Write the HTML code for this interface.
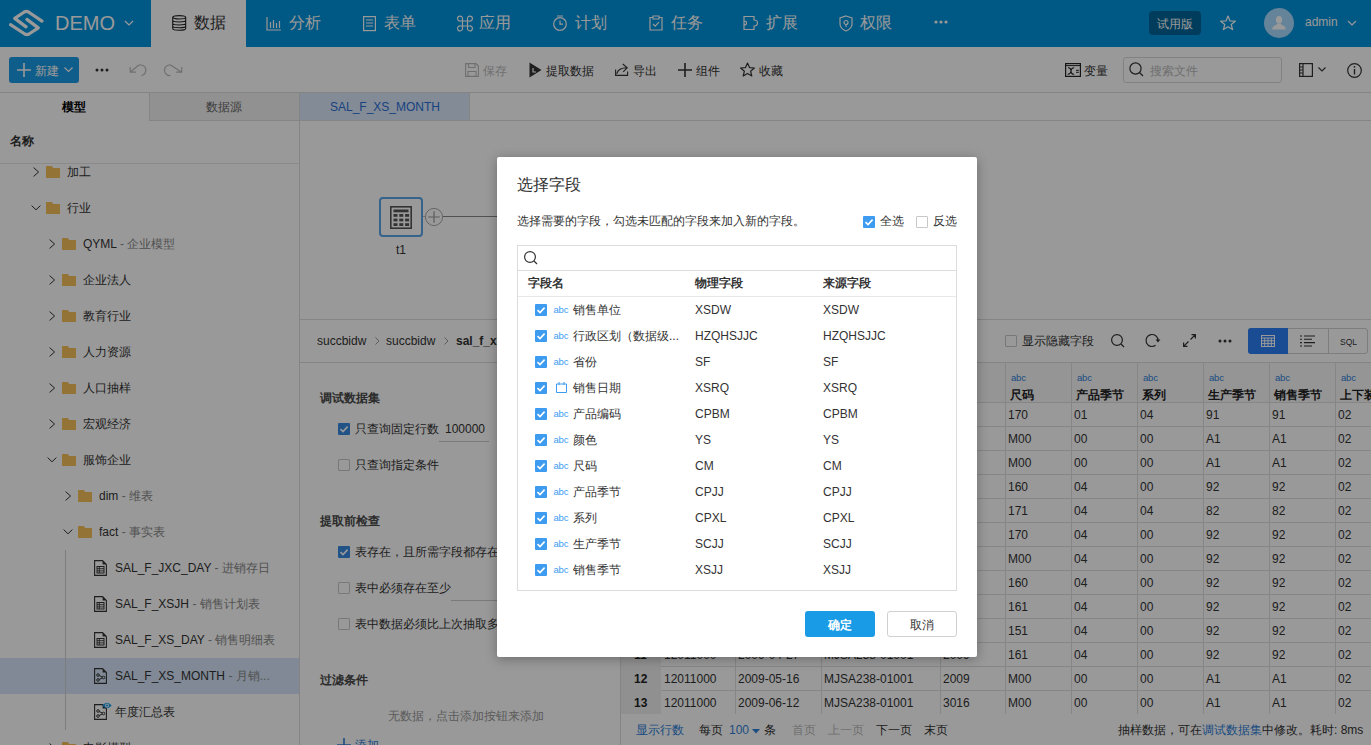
<!DOCTYPE html><html><head><meta charset="utf-8"><style>
*{box-sizing:border-box;margin:0;padding:0}
html,body{width:1371px;height:745px;overflow:hidden;background:#fff}
body{font-family:"Liberation Sans",sans-serif;font-size:12px;color:#333;position:relative}
.a{position:absolute}
.t{position:absolute;white-space:nowrap;line-height:1}
svg{position:absolute;overflow:visible}
#hdr{left:0;top:0;width:1371px;height:47px;background:#0093dc}
.nv{position:absolute;top:15px;font-size:16px;color:#fff;line-height:16px;white-space:nowrap}
#ov{left:0;top:0;width:1371px;height:745px;background:rgba(0,0,0,.4)}
#modal{left:497px;top:157px;width:480px;height:500px;background:#fff;border-radius:2px;box-shadow:0 2px 12px rgba(0,0,0,.3)}
.hl{position:absolute;height:1px;background:#e0e0e0}
.vl{position:absolute;width:1px;background:#e0e0e0}
.cb{position:absolute;width:12px;height:12px;border:1px solid #c8c8c8;background:#fff;border-radius:1px}
.cbk{position:absolute;width:12px;height:12px;background:#3d9cf0;border-radius:1px}
.g{color:#888}
.b{font-weight:bold}
</style></head><body>
<div id="hdr" class="a"></div>
<svg width="50" height="47" style="left:0px;top:0px" viewBox="0 0 50 47"><path d="M42 21.1 L28.5 12 Q26.4 10.8 24.3 12 L14.7 18.4 L26.1 26.9" fill="none" stroke="#fff" stroke-width="3.2" stroke-linecap="round" stroke-linejoin="round"/><path d="M26.9 19.4 L38.3 27.9 L29 34 Q26.9 35.2 24.8 34 L10.5 24.6" fill="none" stroke="#fff" stroke-width="3.2" stroke-linecap="round" stroke-linejoin="round"/></svg>
<div class="t" style="left:55px;top:12.5px;font-size:20px;color:#fff">DEMO</div>
<svg width="10" height="6" style="left:124px;top:20px" viewBox="0 0 10 6"><path d="M1 1 L5 5 L9 1" fill="none" stroke="#fff" stroke-width="1.2"/></svg>
<div class="a" style="left:151px;top:0px;width:95px;height:47px;background:#fff"></div>
<svg width="15" height="16" style="left:172px;top:15px" viewBox="0 0 15 16"><ellipse cx="7.2" cy="2.3" rx="6.5" ry="1.7" fill="none" stroke="#222" stroke-width="1.05"/><path d="M0.7 2.3 V13.6 Q0.7 15.3 7.2 15.3 Q13.7 15.3 13.7 13.6 V2.3 M0.7 5.2 Q0.7 6.9 7.2 6.9 Q13.7 6.9 13.7 5.2 M0.7 8.3 Q0.7 10 7.2 10 Q13.7 10 13.7 8.3 M0.7 11.1 Q0.7 12.8 7.2 12.8 Q13.7 12.8 13.7 11.1" fill="none" stroke="#222" stroke-width="1.05"/></svg>
<div class="nv" style="left:194px;color:#333">数据</div>
<svg width="16" height="15" style="left:266px;top:16px" viewBox="0 0 16 15"><path d="M1 1 V14 H15 M4.5 6 V12 M7.5 4 V12 M10.5 7 V12 M13.5 5 V12" fill="none" stroke="#fff" stroke-width="1.2"/></svg>
<div class="nv" style="left:289px">分析</div>
<svg width="13" height="15" style="left:363px;top:16px" viewBox="0 0 13 15"><rect x="0.6" y="0.6" width="11.8" height="14" fill="none" stroke="#fff" stroke-width="1.2"/><path d="M3 4 H10 M3 7 H10 M3 10 H10" fill="none" stroke="#fff" stroke-width="1.2"/></svg>
<div class="nv" style="left:384px">表单</div>
<svg width="16" height="15" style="left:457px;top:16px" viewBox="0 0 16 15"><path d="M5.5 5 H10.5 V10 H5.5 Z M5.5 5 H3.5 A2.5 2.5 0 1 1 5.5 3 Z M10.5 5 V3 A2.5 2.5 0 1 1 12.5 5 Z M5.5 10 H3.5 A2.5 2.5 0 1 0 5.5 12 Z M10.5 10 V12 A2.5 2.5 0 1 0 12.5 10 Z" fill="none" stroke="#fff" stroke-width="1.2"/></svg>
<div class="nv" style="left:479px">应用</div>
<svg width="16" height="16" style="left:552px;top:15px" viewBox="0 0 16 16"><circle cx="8" cy="9" r="6.3" fill="none" stroke="#fff" stroke-width="1.2"/><path d="M5 1 H11 M8 5.5 V9.2 H11" fill="none" stroke="#fff" stroke-width="1.2"/></svg>
<div class="nv" style="left:575px">计划</div>
<svg width="14" height="16" style="left:649px;top:15px" viewBox="0 0 14 16"><path d="M4 2.5 H1 V15 H13 V2.5 H10 M4 1 H10 V4 H4 Z M4 9 L6.2 11.2 L10 7.2" fill="none" stroke="#fff" stroke-width="1.2"/></svg>
<div class="nv" style="left:671px">任务</div>
<svg width="16" height="16" style="left:743px;top:15px" viewBox="0 0 16 16"><path d="M1 1.5 H11 V5 Q14.5 5 14.5 8 Q14.5 11 11 11 V14.5 H1 Z M1 6 Q3.5 6 3.5 8 Q3.5 10 1 10" fill="none" stroke="#fff" stroke-width="1.2"/></svg>
<div class="nv" style="left:766px">扩展</div>
<svg width="14" height="17" style="left:839px;top:15px" viewBox="0 0 14 17"><path d="M7 1 L13 3 V9 Q13 13.5 7 16 Q1 13.5 1 9 V3 Z" fill="none" stroke="#fff" stroke-width="1.2"/><circle cx="7" cy="7.5" r="2" fill="none" stroke="#fff" stroke-width="1.2"/><path d="M7 9.5 V12" fill="none" stroke="#fff" stroke-width="1.2"/></svg>
<div class="nv" style="left:860px">权限</div>
<svg width="14" height="4" style="left:934px;top:20px" viewBox="0 0 14 4"><circle cx="2" cy="2" r="1.6" fill="#fff"/><circle cx="7" cy="2" r="1.6" fill="#fff"/><circle cx="12" cy="2" r="1.6" fill="#fff"/></svg>
<div class="a" style="left:1149px;top:11px;width:52px;height:24px;background:#00669a;border-radius:4px"></div>
<div class="t" style="left:1157px;top:17.5px;font-size:12px;color:#fff">试用版</div>
<svg width="16" height="15" style="left:1220px;top:15px" viewBox="0 0 16 15"><path d="M8 1 L10 6 L15.3 6.2 L11.2 9.5 L12.6 14.6 L8 11.7 L3.4 14.6 L4.8 9.5 L0.7 6.2 L6 6 Z" fill="none" stroke="#fff" stroke-width="1.2" stroke-linejoin="round"/></svg>
<div class="a" style="left:1264px;top:8px;width:30px;height:30px;background:#a9dcff;border-radius:50%"></div>
<svg width="16" height="16" style="left:1271px;top:15px" viewBox="0 0 16 16"><ellipse cx="8" cy="4.8" rx="3.1" ry="3.8" fill="#fff"/><path d="M1.2 14.6 Q1.2 10.8 5 10.2 L6.4 8.6 H9.6 L11 10.2 Q14.8 10.8 14.8 14.6 Z" fill="#fff"/></svg>
<div class="t" style="left:1305px;top:16px;font-size:12px;color:#fff">admin</div>
<svg width="10" height="6" style="left:1347px;top:20px" viewBox="0 0 10 6"><path d="M1 1 L5 5 L9 1" fill="none" stroke="#fff" stroke-width="1.2"/></svg>
<div class="a" style="left:0px;top:92px;width:1371px;height:1px;background:#dcdcdc"></div>
<div class="a" style="left:9px;top:57px;width:70px;height:26px;background:#1a9be6;border-radius:3px"></div>
<svg width="14" height="14" style="left:17px;top:63px" viewBox="0 0 14 14"><path d="M7 0 V14 M0 7 H14" fill="none" stroke="#fff" stroke-width="1.6"/></svg>
<div class="t" style="left:35px;top:65px;font-size:12px;color:#fff">新建</div>
<svg width="9" height="5" style="left:64px;top:67px" viewBox="0 0 9 5"><path d="M0.5 0.5 L4.5 4.5 L8.5 0.5" fill="none" stroke="#fff" stroke-width="1.1"/></svg>
<svg width="14" height="4" style="left:95px;top:68px" viewBox="0 0 14 4"><circle cx="2" cy="2" r="1.5" fill="#333"/><circle cx="7" cy="2" r="1.5" fill="#333"/><circle cx="12" cy="2" r="1.5" fill="#333"/></svg>
<svg width="20" height="16" style="left:128px;top:62px" viewBox="0 0 20 16"><path d="M2.2 5 V10.2 H7.9 M2.2 10.2 L10.5 3.3 Q11.5 2.7 13 3 A5.3 5.3 0 0 1 13.4 13.5" fill="none" stroke="#bbb" stroke-width="1.2"/></svg>
<svg width="20" height="16" style="left:163px;top:62px" viewBox="0 0 20 16"><path d="M18.7 5 V10.2 H13.2 M18.7 10.2 L8 3.3 Q7 2.7 6 3 A5.3 5.3 0 0 0 7.5 13.5" fill="none" stroke="#bbb" stroke-width="1.2"/></svg>
<svg width="14" height="14" style="left:465px;top:63px" viewBox="0 0 14 14"><path d="M0.6 0.6 H11 L13.4 3 V13.4 H0.6 Z M3.5 0.6 V4.5 H10 V0.6 M3 13.4 V8.5 H11 V13.4" fill="none" stroke="#bbb" stroke-width="1.1"/></svg>
<div class="t" style="left:483px;top:65px;color:#bbb">保存</div>
<svg width="13" height="16" style="left:529px;top:62px" viewBox="0 0 13 16"><path d="M0.5 0.5 L12.5 8 L0.5 15.5 Z" fill="#333"/><path d="M4 6 V10 H7" fill="none" stroke="#fff" stroke-width="1.2"/></svg>
<div class="t" style="left:546px;top:65px;">提取数据</div>
<svg width="14" height="14" style="left:615px;top:63px" viewBox="0 0 14 14"><path d="M0.6 6.5 V12.4 H12.6 V8.5 M1.8 10.8 Q3 4.8 12.2 4.8 M7.8 1 L12.2 4.8 L8.2 8.8" fill="none" stroke="#333" stroke-width="1.1"/></svg>
<div class="t" style="left:633px;top:65px;">导出</div>
<svg width="14" height="14" style="left:678px;top:63px" viewBox="0 0 14 14"><path d="M7 0 V14 M0 7 H14" fill="none" stroke="#333" stroke-width="1.6"/></svg>
<div class="t" style="left:696px;top:65px;">组件</div>
<svg width="15" height="15" style="left:740px;top:62px" viewBox="0 0 15 15"><path d="M7.5 1 L9.5 5.6 L14.4 6 L10.6 9.2 L11.8 14 L7.5 11.4 L3.2 14 L4.4 9.2 L0.6 6 L5.5 5.6 Z" fill="none" stroke="#333" stroke-width="1.2" stroke-linejoin="round"/></svg>
<div class="t" style="left:759px;top:65px;">收藏</div>
<svg width="16" height="14" style="left:1065px;top:63px" viewBox="0 0 16 14"><rect x="0.6" y="0.6" width="14.8" height="12.8" fill="none" stroke="#222" stroke-width="1.2"/><path d="M0.6 2.6 H15.4" stroke="#222" stroke-width="1"/><path d="M3 4.8 Q5.8 4.6 6 8 Q6.2 11.4 9.2 11.2 M9.2 4.8 Q6.4 4.6 6 8 Q5.6 11.4 2.6 11.2" fill="none" stroke="#222" stroke-width="1.1"/><path d="M11 7.3 H13.8 M11 9.3 H13.8" stroke="#222" stroke-width="1"/></svg>
<div class="t" style="left:1084px;top:65px;">变量</div>
<div class="a" style="left:1123px;top:57px;width:159px;height:26px;border:1px solid #d9d9d9;border-radius:3px;background:#fff"></div>
<svg width="15" height="15" style="left:1129px;top:62px" viewBox="0 0 15 15"><circle cx="6.5" cy="6.5" r="5.6" fill="none" stroke="#333" stroke-width="1.2"/><path d="M10.5 10.5 L14 14" fill="none" stroke="#333" stroke-width="1.2"/></svg>
<div class="t" style="left:1150px;top:65px;color:#bbb">搜索文件</div>
<svg width="14" height="14" style="left:1299px;top:63px" viewBox="0 0 14 14"><rect x="0.6" y="0.6" width="12.8" height="12.8" fill="none" stroke="#333" stroke-width="1.2"/><path d="M4 0.6 V13.4 M0.6 4 H4 M0.6 7 H4 M0.6 10 H4" fill="none" stroke="#333" stroke-width="1.2"/></svg>
<svg width="8" height="5" style="left:1318px;top:67px" viewBox="0 0 8 5"><path d="M0.5 0.5 L4 4 L7.5 0.5" fill="none" stroke="#333" stroke-width="1.1"/></svg>
<svg width="15" height="15" style="left:1347px;top:63px" viewBox="0 0 15 15"><circle cx="7.5" cy="7.5" r="6.8" fill="none" stroke="#333" stroke-width="1.2"/><path d="M7.5 6 V11.5" stroke="#333" stroke-width="1.4"/><circle cx="7.5" cy="3.8" r="0.9" fill="#333"/></svg>
<div class="a" style="left:149px;top:93px;width:150px;height:28px;background:#f2f2f2;border-left:1px solid #dcdcdc;border-bottom:1px solid #dcdcdc"></div>
<div class="t" style="left:62px;top:101px;font-size:12px;font-weight:bold;color:#000">模型</div>
<div class="t" style="left:206px;top:101px;font-size:12px;color:#666">数据源</div>
<div class="a" style="left:299px;top:93px;width:1px;height:652px;background:#dcdcdc"></div>
<div class="t" style="left:10px;top:135px;font-size:12px;font-weight:bold;color:#333">名称</div>
<div class="a" style="left:0px;top:163px;width:299px;height:1px;background:#e6e6e6"></div>
<div class="a" style="left:0;top:164px;width:299px;height:581px;overflow:hidden">
<div class="a" style="left:0px;top:494px;width:299px;height:36px;background:#d5e5f8"></div>
<div class="a" style="left:65px;top:386px;width:1px;height:180px;background:#d0d0d0"></div>
<svg width="7" height="10" style="left:32.5px;top:2.5px" viewBox="0 0 7 10"><path d="M0.6 0.6 L5.6 5 L0.6 9.4" fill="none" stroke="#333" stroke-width="1"/></svg>
<svg width="14" height="12" style="left:46px;top:2px" viewBox="0 0 14 12"><path d="M0 0 H5.8 L7.3 2 H14 V12 H0 Z" fill="#f7c05a"/></svg>
<div class="t" style="left:67px;top:2px;font-size:12px">加工</div>
<svg width="10" height="6" style="left:30.5px;top:41px" viewBox="0 0 10 6"><path d="M0.6 0.6 L5 4.8 L9.4 0.6" fill="none" stroke="#333" stroke-width="1"/></svg>
<svg width="14" height="12" style="left:46px;top:38px" viewBox="0 0 14 12"><path d="M0 0 H5.8 L7.3 2 H14 V12 H0 Z" fill="#f7c05a"/></svg>
<div class="t" style="left:67px;top:38px;font-size:12px">行业</div>
<svg width="7" height="10" style="left:48.5px;top:74.5px" viewBox="0 0 7 10"><path d="M0.6 0.6 L5.6 5 L0.6 9.4" fill="none" stroke="#333" stroke-width="1"/></svg>
<svg width="14" height="12" style="left:62px;top:74px" viewBox="0 0 14 12"><path d="M0 0 H5.8 L7.3 2 H14 V12 H0 Z" fill="#f7c05a"/></svg>
<div class="t" style="left:83px;top:74px;font-size:12px">QYML<span class="g"> - 企业模型</span></div>
<svg width="7" height="10" style="left:48.5px;top:110.5px" viewBox="0 0 7 10"><path d="M0.6 0.6 L5.6 5 L0.6 9.4" fill="none" stroke="#333" stroke-width="1"/></svg>
<svg width="14" height="12" style="left:62px;top:110px" viewBox="0 0 14 12"><path d="M0 0 H5.8 L7.3 2 H14 V12 H0 Z" fill="#f7c05a"/></svg>
<div class="t" style="left:83px;top:110px;font-size:12px">企业法人</div>
<svg width="7" height="10" style="left:48.5px;top:146.5px" viewBox="0 0 7 10"><path d="M0.6 0.6 L5.6 5 L0.6 9.4" fill="none" stroke="#333" stroke-width="1"/></svg>
<svg width="14" height="12" style="left:62px;top:146px" viewBox="0 0 14 12"><path d="M0 0 H5.8 L7.3 2 H14 V12 H0 Z" fill="#f7c05a"/></svg>
<div class="t" style="left:83px;top:146px;font-size:12px">教育行业</div>
<svg width="7" height="10" style="left:48.5px;top:182.5px" viewBox="0 0 7 10"><path d="M0.6 0.6 L5.6 5 L0.6 9.4" fill="none" stroke="#333" stroke-width="1"/></svg>
<svg width="14" height="12" style="left:62px;top:182px" viewBox="0 0 14 12"><path d="M0 0 H5.8 L7.3 2 H14 V12 H0 Z" fill="#f7c05a"/></svg>
<div class="t" style="left:83px;top:182px;font-size:12px">人力资源</div>
<svg width="7" height="10" style="left:48.5px;top:218.5px" viewBox="0 0 7 10"><path d="M0.6 0.6 L5.6 5 L0.6 9.4" fill="none" stroke="#333" stroke-width="1"/></svg>
<svg width="14" height="12" style="left:62px;top:218px" viewBox="0 0 14 12"><path d="M0 0 H5.8 L7.3 2 H14 V12 H0 Z" fill="#f7c05a"/></svg>
<div class="t" style="left:83px;top:218px;font-size:12px">人口抽样</div>
<svg width="7" height="10" style="left:48.5px;top:254.5px" viewBox="0 0 7 10"><path d="M0.6 0.6 L5.6 5 L0.6 9.4" fill="none" stroke="#333" stroke-width="1"/></svg>
<svg width="14" height="12" style="left:62px;top:254px" viewBox="0 0 14 12"><path d="M0 0 H5.8 L7.3 2 H14 V12 H0 Z" fill="#f7c05a"/></svg>
<div class="t" style="left:83px;top:254px;font-size:12px">宏观经济</div>
<svg width="10" height="6" style="left:46.5px;top:293px" viewBox="0 0 10 6"><path d="M0.6 0.6 L5 4.8 L9.4 0.6" fill="none" stroke="#333" stroke-width="1"/></svg>
<svg width="14" height="12" style="left:62px;top:290px" viewBox="0 0 14 12"><path d="M0 0 H5.8 L7.3 2 H14 V12 H0 Z" fill="#f7c05a"/></svg>
<div class="t" style="left:83px;top:290px;font-size:12px">服饰企业</div>
<svg width="7" height="10" style="left:64.5px;top:326.5px" viewBox="0 0 7 10"><path d="M0.6 0.6 L5.6 5 L0.6 9.4" fill="none" stroke="#333" stroke-width="1"/></svg>
<svg width="14" height="12" style="left:78px;top:326px" viewBox="0 0 14 12"><path d="M0 0 H5.8 L7.3 2 H14 V12 H0 Z" fill="#f7c05a"/></svg>
<div class="t" style="left:99px;top:326px;font-size:12px">dim<span class="g"> - 维表</span></div>
<svg width="10" height="6" style="left:62.5px;top:365px" viewBox="0 0 10 6"><path d="M0.6 0.6 L5 4.8 L9.4 0.6" fill="none" stroke="#333" stroke-width="1"/></svg>
<svg width="14" height="12" style="left:78px;top:362px" viewBox="0 0 14 12"><path d="M0 0 H5.8 L7.3 2 H14 V12 H0 Z" fill="#f7c05a"/></svg>
<div class="t" style="left:99px;top:362px;font-size:12px">fact<span class="g"> - 事实表</span></div>
<svg width="13" height="16" style="left:94px;top:396px" viewBox="0 0 13 16"><path d="M0.6 0.6 H8.6 L12.4 4.4 V15.4 H0.6 Z" fill="none" stroke="#333" stroke-width="1.1"/><path d="M8.6 0.6 L12.4 4.4 H8.6 Z" fill="#333"/><rect x="3" y="6.5" width="7" height="6.5" fill="none" stroke="#333" stroke-width="1"/><path d="M3 8.7 H10 M3 10.9 H10 M5.3 6.5 V13" stroke="#333" stroke-width="0.9"/></svg>
<div class="t" style="left:115px;top:398px;font-size:12px">SAL_F_JXC_DAY<span class="g"> - 进销存日</span></div>
<svg width="13" height="16" style="left:94px;top:432px" viewBox="0 0 13 16"><path d="M0.6 0.6 H8.6 L12.4 4.4 V15.4 H0.6 Z" fill="none" stroke="#333" stroke-width="1.1"/><path d="M8.6 0.6 L12.4 4.4 H8.6 Z" fill="#333"/><rect x="3" y="6.5" width="7" height="6.5" fill="none" stroke="#333" stroke-width="1"/><path d="M3 8.7 H10 M3 10.9 H10 M5.3 6.5 V13" stroke="#333" stroke-width="0.9"/></svg>
<div class="t" style="left:115px;top:434px;font-size:12px">SAL_F_XSJH<span class="g"> - 销售计划表</span></div>
<svg width="13" height="16" style="left:94px;top:468px" viewBox="0 0 13 16"><path d="M0.6 0.6 H8.6 L12.4 4.4 V15.4 H0.6 Z" fill="none" stroke="#333" stroke-width="1.1"/><path d="M8.6 0.6 L12.4 4.4 H8.6 Z" fill="#333"/><rect x="3" y="6.5" width="7" height="6.5" fill="none" stroke="#333" stroke-width="1"/><path d="M3 8.7 H10 M3 10.9 H10 M5.3 6.5 V13" stroke="#333" stroke-width="0.9"/></svg>
<div class="t" style="left:115px;top:470px;font-size:12px">SAL_F_XS_DAY<span class="g"> - 销售明细表</span></div>
<svg width="13" height="16" style="left:94px;top:504px" viewBox="0 0 13 16"><path d="M0.6 0.6 H8.6 L12.4 4.4 V15.4 H0.6 Z" fill="none" stroke="#333" stroke-width="1.1"/><path d="M8.6 0.6 L12.4 4.4 H8.6 Z" fill="#333"/><circle cx="4" cy="7" r="1.3" fill="none" stroke="#333"/><circle cx="4" cy="12" r="1.3" fill="none" stroke="#333"/><circle cx="9.5" cy="9.5" r="1.3" fill="none" stroke="#333"/><path d="M5 7.5 L8.4 9 M5 11.5 L8.4 10" stroke="#333" stroke-width="1"/></svg>
<div class="t" style="left:115px;top:506px;font-size:12px">SAL_F_XS_MONTH<span class="g"> - 月销...</span></div>
<svg width="13" height="16" style="left:94px;top:540px" viewBox="0 0 13 16"><path d="M0.6 0.6 H8.6 L12.4 4.4 V15.4 H0.6 Z" fill="none" stroke="#333" stroke-width="1.1"/><path d="M8.6 0.6 L12.4 4.4 H8.6 Z" fill="#333"/><circle cx="4" cy="7" r="1.3" fill="none" stroke="#333"/><circle cx="4" cy="12" r="1.3" fill="none" stroke="#333"/><circle cx="9.5" cy="9.5" r="1.3" fill="none" stroke="#333"/><path d="M5 7.5 L8.4 9 M5 11.5 L8.4 10" stroke="#333" stroke-width="1"/></svg>
<svg width="10" height="7" style="left:101.5px;top:537.5px" viewBox="0 0 10 7"><path d="M0.3 3.5 Q5 -1.8 9.7 3.5 Q5 8.8 0.3 3.5 Z" fill="#1a9be6"/><circle cx="5" cy="3.5" r="1.9" fill="#fff"/><circle cx="5" cy="3.5" r="1.1" fill="#1a9be6"/></svg>
<div class="t" style="left:115px;top:542px;font-size:12px">年度汇总表</div>
<svg width="7" height="10" style="left:48.5px;top:578.5px" viewBox="0 0 7 10"><path d="M0.6 0.6 L5.6 5 L0.6 9.4" fill="none" stroke="#333" stroke-width="1"/></svg>
<svg width="14" height="12" style="left:62px;top:578px" viewBox="0 0 14 12"><path d="M0 0 H5.8 L7.3 2 H14 V12 H0 Z" fill="#f7c05a"/></svg>
<div class="t" style="left:83px;top:578px;font-size:12px">电影模型</div>
</div>
<div class="a" style="left:300px;top:120px;width:1071px;height:1px;background:#dcdcdc"></div>
<div class="a" style="left:300px;top:93px;width:170px;height:27px;background:#d9e8fb;border-right:1px solid #dcdcdc"></div>
<div class="t" style="left:330px;top:101px;font-size:12px;color:#2b6fd6">SAL_F_XS_MONTH</div>
<div class="a" style="left:379px;top:197px;width:44px;height:40px;border:2px solid #5aa6e8;border-radius:4px;background:#fff"></div>
<svg width="22" height="23" style="left:390px;top:206px" viewBox="0 0 22 23"><rect x="0.8" y="0.8" width="20.4" height="21.4" fill="none" stroke="#555" stroke-width="1.6"/><rect x="3.5" y="3.5" width="15" height="2.8" fill="#555"/><rect x="3.5" y="8.0" width="4" height="2.8" fill="#555"/><rect x="9.3" y="8.0" width="4" height="2.8" fill="#555"/><rect x="15.1" y="8.0" width="4" height="2.8" fill="#555"/><rect x="3.5" y="12.6" width="4" height="2.8" fill="#555"/><rect x="9.3" y="12.6" width="4" height="2.8" fill="#555"/><rect x="15.1" y="12.6" width="4" height="2.8" fill="#555"/><rect x="3.5" y="17.2" width="4" height="2.8" fill="#555"/><rect x="9.3" y="17.2" width="4" height="2.8" fill="#555"/><rect x="15.1" y="17.2" width="4" height="2.8" fill="#555"/></svg>
<svg width="18" height="18" style="left:425px;top:208px" viewBox="0 0 18 18"><circle cx="9" cy="9" r="8.6" fill="none" stroke="#aaa" stroke-width="1"/><path d="M9 3.2 V14.8 M3.2 9 H14.8" stroke="#999" stroke-width="1.2"/></svg>
<div class="a" style="left:423px;top:216px;width:2px;height:1px;background:#bbb"></div>
<div class="a" style="left:443px;top:216px;width:60px;height:1px;background:#888"></div>
<div class="t" style="left:396px;top:244px;font-size:12px">t1</div>
<div class="a" style="left:300px;top:319px;width:1071px;height:1px;background:#dcdcdc"></div>
<div class="t" style="left:317px;top:335px;font-size:12px">succbidw</div>
<svg width="5" height="8" style="left:375px;top:337px" viewBox="0 0 5 8"><path d="M0.5 0.5 L4 4 L0.5 7.5" fill="none" stroke="#999" stroke-width="1"/></svg>
<div class="t" style="left:386px;top:335px;font-size:12px">succbidw</div>
<svg width="5" height="8" style="left:444px;top:337px" viewBox="0 0 5 8"><path d="M0.5 0.5 L4 4 L0.5 7.5" fill="none" stroke="#999" stroke-width="1"/></svg>
<div class="t" style="left:456px;top:335px;font-size:12px;font-weight:bold">sal_f_xs_month</div>
<div class="a" style="left:300px;top:362px;width:1071px;height:1px;background:#dcdcdc"></div>
<div class="cb" style="left:1005px;top:335px"></div>
<div class="t" style="left:1022px;top:335px;font-size:12px">显示隐藏字段</div>
<svg width="14" height="14" style="left:1111px;top:334px" viewBox="0 0 14 14"><circle cx="6" cy="6" r="5.4" fill="none" stroke="#333" stroke-width="1.2"/><path d="M10 10 L13 13" fill="none" stroke="#333" stroke-width="1.2"/></svg>
<svg width="16" height="15" style="left:1145px;top:333px" viewBox="0 0 16 15"><path d="M13 7.5 A6 6 0 1 0 10.6 12.3" fill="none" stroke="#333" stroke-width="1.2"/><path d="M10.6 6.6 L15.4 6.6 L13 9.6 Z" fill="#333"/></svg>
<svg width="13" height="13" style="left:1183px;top:334px" viewBox="0 0 13 13"><path d="M8.5 0.6 H12.4 V4.5 M12.4 0.6 L7.5 5.5 M4.5 12.4 H0.6 V8.5 M0.6 12.4 L5.5 7.5" fill="none" stroke="#333" stroke-width="1.2"/></svg>
<svg width="14" height="4" style="left:1218px;top:339px" viewBox="0 0 14 4"><circle cx="2" cy="2" r="1.5" fill="#333"/><circle cx="7" cy="2" r="1.5" fill="#333"/><circle cx="12" cy="2" r="1.5" fill="#333"/></svg>
<div class="a" style="left:1248px;top:328px;width:120px;height:26px;border:1px solid #d0d0d0;border-radius:3px;background:#fff"></div>
<div class="a" style="left:1248px;top:328px;width:40px;height:26px;background:#2a7ff5;border-radius:3px 0 0 3px"></div>
<div class="a" style="left:1328px;top:328px;width:1px;height:26px;background:#d0d0d0"></div>
<svg width="14" height="12" style="left:1261px;top:335px" viewBox="0 0 14 12"><rect x="0.5" y="0.5" width="13" height="11" fill="none" stroke="#fff"/><path d="M0.5 3.0 H13.5" stroke="#fff" stroke-width="1"/><path d="M0.5 5.8 H13.5" stroke="#fff" stroke-width="1"/><path d="M0.5 8.6 H13.5" stroke="#fff" stroke-width="1"/><path d="M3.7 3 V11.5" stroke="#fff" stroke-width="1"/><path d="M7.0 3 V11.5" stroke="#fff" stroke-width="1"/><path d="M10.3 3 V11.5" stroke="#fff" stroke-width="1"/></svg>
<svg width="15" height="12" style="left:1300px;top:335px" viewBox="0 0 15 12"><path d="M0 1 H2 M4 1 H15 M0 4.3 H2 M4 4.3 H12 M0 7.6 H2 M4 7.6 H15 M0 11 H2 M4 11 H12" stroke="#333" stroke-width="1.1"/></svg>
<div class="t" style="left:1340px;top:337.5px;font-size:8.5px;color:#333">SQL</div>
<div class="a" style="left:620px;top:362px;width:1px;height:383px;background:#dcdcdc"></div>
<div class="t" style="left:320px;top:392px;font-size:12px;font-weight:bold;color:#4a4a4a">调试数据集</div>
<div class="cbk" style="left:338px;top:423px;background:#3a8ae0"></div>
<svg width="12" height="12" style="left:338px;top:423px" viewBox="0 0 12 12"><path d="M2.5 6.2 L5 8.6 L9.6 3.6" fill="none" stroke="#fff" stroke-width="1.6"/></svg>
<div class="t" style="left:355px;top:423px;font-size:12px">只查询固定行数</div>
<div class="t" style="left:445px;top:423px;font-size:12px">100000</div>
<div class="a" style="left:439px;top:441px;width:50px;height:1px;background:#ccc"></div>
<div class="cb" style="left:338px;top:459px"></div>
<div class="t" style="left:355px;top:459px;font-size:12px">只查询指定条件</div>
<div class="t" style="left:320px;top:515px;font-size:12px;font-weight:bold;color:#4a4a4a">提取前检查</div>
<div class="cbk" style="left:338px;top:546px;background:#3a8ae0"></div>
<svg width="12" height="12" style="left:338px;top:546px" viewBox="0 0 12 12"><path d="M2.5 6.2 L5 8.6 L9.6 3.6" fill="none" stroke="#fff" stroke-width="1.6"/></svg>
<div class="t" style="left:355px;top:546px;font-size:12px">表存在，且所需字段都存在</div>
<div class="cb" style="left:338px;top:582px"></div>
<div class="t" style="left:355px;top:582px;font-size:12px">表中必须存在至少</div>
<div class="a" style="left:451px;top:600px;width:60px;height:1px;background:#ccc"></div>
<div class="cb" style="left:338px;top:618px"></div>
<div class="t" style="left:355px;top:618px;font-size:12px">表中数据必须比上次抽取多</div>
<div class="t" style="left:320px;top:674px;font-size:12px;font-weight:bold;color:#4a4a4a">过滤条件</div>
<div class="t" style="left:388px;top:710px;font-size:12px;color:#999">无数据，点击添加按钮来添加</div>
<svg width="14" height="14" style="left:337px;top:738px" viewBox="0 0 14 14"><path d="M7 0 V14 M0 7 H14" fill="none" stroke="#2f7fd8" stroke-width="1.6"/></svg>
<div class="t" style="left:355px;top:739px;font-size:12px;color:#2f7fd8">添加</div>
<div class="a" style="left:621px;top:363px;width:750px;height:39px;background:#f9f9f9"></div>
<div class="a" style="left:621px;top:403px;width:40px;height:311px;background:#f0f0f0"></div>
<div class="a" style="left:735px;top:362px;width:1px;height:352px;background:#e0e0e0"></div>
<div class="a" style="left:821px;top:362px;width:1px;height:352px;background:#e0e0e0"></div>
<div class="a" style="left:940px;top:362px;width:1px;height:352px;background:#e0e0e0"></div>
<div class="a" style="left:1005px;top:362px;width:1px;height:352px;background:#e0e0e0"></div>
<div class="a" style="left:1071px;top:362px;width:1px;height:352px;background:#e0e0e0"></div>
<div class="a" style="left:1137px;top:362px;width:1px;height:352px;background:#e0e0e0"></div>
<div class="a" style="left:1203px;top:362px;width:1px;height:352px;background:#e0e0e0"></div>
<div class="a" style="left:1269px;top:362px;width:1px;height:352px;background:#e0e0e0"></div>
<div class="a" style="left:1335px;top:362px;width:1px;height:352px;background:#e0e0e0"></div>
<div class="a" style="left:1401px;top:362px;width:1px;height:352px;background:#e0e0e0"></div>
<div class="a" style="left:661px;top:402px;width:710px;height:1px;background:#e0e0e0"></div>
<div class="a" style="left:661px;top:426px;width:710px;height:1px;background:#e0e0e0"></div>
<div class="a" style="left:661px;top:450px;width:710px;height:1px;background:#e0e0e0"></div>
<div class="a" style="left:661px;top:474px;width:710px;height:1px;background:#e0e0e0"></div>
<div class="a" style="left:661px;top:498px;width:710px;height:1px;background:#e0e0e0"></div>
<div class="a" style="left:661px;top:522px;width:710px;height:1px;background:#e0e0e0"></div>
<div class="a" style="left:661px;top:546px;width:710px;height:1px;background:#e0e0e0"></div>
<div class="a" style="left:661px;top:570px;width:710px;height:1px;background:#e0e0e0"></div>
<div class="a" style="left:661px;top:594px;width:710px;height:1px;background:#e0e0e0"></div>
<div class="a" style="left:661px;top:618px;width:710px;height:1px;background:#e0e0e0"></div>
<div class="a" style="left:661px;top:642px;width:710px;height:1px;background:#e0e0e0"></div>
<div class="a" style="left:661px;top:666px;width:710px;height:1px;background:#e0e0e0"></div>
<div class="a" style="left:661px;top:690px;width:710px;height:1px;background:#e0e0e0"></div>
<div class="t" style="left:667px;top:373px;font-size:9.5px;letter-spacing:-0.2px;color:#2f7fd8">abc</div>
<div class="t" style="left:666px;top:389px;font-size:12px;font-weight:bold;color:#222">门店编码</div>
<div class="t" style="left:741px;top:373px;font-size:9.5px;letter-spacing:-0.2px;color:#2f7fd8">abc</div>
<div class="t" style="left:740px;top:389px;font-size:12px;font-weight:bold;color:#222">销售日期</div>
<div class="t" style="left:827px;top:373px;font-size:9.5px;letter-spacing:-0.2px;color:#2f7fd8">abc</div>
<div class="t" style="left:826px;top:389px;font-size:12px;font-weight:bold;color:#222">产品编码</div>
<div class="t" style="left:946px;top:373px;font-size:9.5px;letter-spacing:-0.2px;color:#2f7fd8">abc</div>
<div class="t" style="left:945px;top:389px;font-size:12px;font-weight:bold;color:#222">年份</div>
<div class="t" style="left:1011px;top:373px;font-size:9.5px;letter-spacing:-0.2px;color:#2f7fd8">abc</div>
<div class="t" style="left:1010px;top:389px;font-size:12px;font-weight:bold;color:#222">尺码</div>
<div class="t" style="left:1077px;top:373px;font-size:9.5px;letter-spacing:-0.2px;color:#2f7fd8">abc</div>
<div class="t" style="left:1076px;top:389px;font-size:12px;font-weight:bold;color:#222">产品季节</div>
<div class="t" style="left:1143px;top:373px;font-size:9.5px;letter-spacing:-0.2px;color:#2f7fd8">abc</div>
<div class="t" style="left:1142px;top:389px;font-size:12px;font-weight:bold;color:#222">系列</div>
<div class="t" style="left:1209px;top:373px;font-size:9.5px;letter-spacing:-0.2px;color:#2f7fd8">abc</div>
<div class="t" style="left:1208px;top:389px;font-size:12px;font-weight:bold;color:#222">生产季节</div>
<div class="t" style="left:1275px;top:373px;font-size:9.5px;letter-spacing:-0.2px;color:#2f7fd8">abc</div>
<div class="t" style="left:1274px;top:389px;font-size:12px;font-weight:bold;color:#222">销售季节</div>
<div class="t" style="left:1341px;top:373px;font-size:9.5px;letter-spacing:-0.2px;color:#2f7fd8">abc</div>
<div class="t" style="left:1340px;top:389px;font-size:12px;font-weight:bold;color:#222">上下装</div>
<div class="t" style="left:637px;top:409px;font-size:12px;font-weight:bold;color:#222">1</div>
<div class="t" style="left:664px;top:409px;font-size:12px">12011000</div>
<div class="t" style="left:738px;top:409px;font-size:12px">2009-01-05</div>
<div class="t" style="left:824px;top:409px;font-size:12px">MJSA238-01001</div>
<div class="t" style="left:943px;top:409px;font-size:12px">2009</div>
<div class="t" style="left:1008px;top:409px;font-size:12px">170</div>
<div class="t" style="left:1074px;top:409px;font-size:12px">01</div>
<div class="t" style="left:1140px;top:409px;font-size:12px">04</div>
<div class="t" style="left:1206px;top:409px;font-size:12px">91</div>
<div class="t" style="left:1272px;top:409px;font-size:12px">91</div>
<div class="t" style="left:1338px;top:409px;font-size:12px">02</div>
<div class="t" style="left:637px;top:433px;font-size:12px;font-weight:bold;color:#222">2</div>
<div class="t" style="left:664px;top:433px;font-size:12px">12011000</div>
<div class="t" style="left:738px;top:433px;font-size:12px">2009-01-09</div>
<div class="t" style="left:824px;top:433px;font-size:12px">MJSA238-01001</div>
<div class="t" style="left:943px;top:433px;font-size:12px">2009</div>
<div class="t" style="left:1008px;top:433px;font-size:12px">M00</div>
<div class="t" style="left:1074px;top:433px;font-size:12px">00</div>
<div class="t" style="left:1140px;top:433px;font-size:12px">00</div>
<div class="t" style="left:1206px;top:433px;font-size:12px">A1</div>
<div class="t" style="left:1272px;top:433px;font-size:12px">A1</div>
<div class="t" style="left:1338px;top:433px;font-size:12px">02</div>
<div class="t" style="left:637px;top:457px;font-size:12px;font-weight:bold;color:#222">3</div>
<div class="t" style="left:664px;top:457px;font-size:12px">12011000</div>
<div class="t" style="left:738px;top:457px;font-size:12px">2009-01-12</div>
<div class="t" style="left:824px;top:457px;font-size:12px">MJSA238-01001</div>
<div class="t" style="left:943px;top:457px;font-size:12px">2009</div>
<div class="t" style="left:1008px;top:457px;font-size:12px">M00</div>
<div class="t" style="left:1074px;top:457px;font-size:12px">00</div>
<div class="t" style="left:1140px;top:457px;font-size:12px">00</div>
<div class="t" style="left:1206px;top:457px;font-size:12px">A1</div>
<div class="t" style="left:1272px;top:457px;font-size:12px">A1</div>
<div class="t" style="left:1338px;top:457px;font-size:12px">02</div>
<div class="t" style="left:637px;top:481px;font-size:12px;font-weight:bold;color:#222">4</div>
<div class="t" style="left:664px;top:481px;font-size:12px">12011000</div>
<div class="t" style="left:738px;top:481px;font-size:12px">2009-02-03</div>
<div class="t" style="left:824px;top:481px;font-size:12px">MJSA238-01001</div>
<div class="t" style="left:943px;top:481px;font-size:12px">2009</div>
<div class="t" style="left:1008px;top:481px;font-size:12px">160</div>
<div class="t" style="left:1074px;top:481px;font-size:12px">04</div>
<div class="t" style="left:1140px;top:481px;font-size:12px">00</div>
<div class="t" style="left:1206px;top:481px;font-size:12px">92</div>
<div class="t" style="left:1272px;top:481px;font-size:12px">92</div>
<div class="t" style="left:1338px;top:481px;font-size:12px">02</div>
<div class="t" style="left:637px;top:505px;font-size:12px;font-weight:bold;color:#222">5</div>
<div class="t" style="left:664px;top:505px;font-size:12px">12011000</div>
<div class="t" style="left:738px;top:505px;font-size:12px">2009-02-16</div>
<div class="t" style="left:824px;top:505px;font-size:12px">MJSA238-01001</div>
<div class="t" style="left:943px;top:505px;font-size:12px">2009</div>
<div class="t" style="left:1008px;top:505px;font-size:12px">171</div>
<div class="t" style="left:1074px;top:505px;font-size:12px">04</div>
<div class="t" style="left:1140px;top:505px;font-size:12px">04</div>
<div class="t" style="left:1206px;top:505px;font-size:12px">82</div>
<div class="t" style="left:1272px;top:505px;font-size:12px">82</div>
<div class="t" style="left:1338px;top:505px;font-size:12px">02</div>
<div class="t" style="left:637px;top:529px;font-size:12px;font-weight:bold;color:#222">6</div>
<div class="t" style="left:664px;top:529px;font-size:12px">12011000</div>
<div class="t" style="left:738px;top:529px;font-size:12px">2009-03-02</div>
<div class="t" style="left:824px;top:529px;font-size:12px">MJSA238-01001</div>
<div class="t" style="left:943px;top:529px;font-size:12px">2009</div>
<div class="t" style="left:1008px;top:529px;font-size:12px">170</div>
<div class="t" style="left:1074px;top:529px;font-size:12px">04</div>
<div class="t" style="left:1140px;top:529px;font-size:12px">00</div>
<div class="t" style="left:1206px;top:529px;font-size:12px">92</div>
<div class="t" style="left:1272px;top:529px;font-size:12px">92</div>
<div class="t" style="left:1338px;top:529px;font-size:12px">02</div>
<div class="t" style="left:637px;top:553px;font-size:12px;font-weight:bold;color:#222">7</div>
<div class="t" style="left:664px;top:553px;font-size:12px">12011000</div>
<div class="t" style="left:738px;top:553px;font-size:12px">2009-03-11</div>
<div class="t" style="left:824px;top:553px;font-size:12px">MJSA238-01001</div>
<div class="t" style="left:943px;top:553px;font-size:12px">2009</div>
<div class="t" style="left:1008px;top:553px;font-size:12px">M00</div>
<div class="t" style="left:1074px;top:553px;font-size:12px">04</div>
<div class="t" style="left:1140px;top:553px;font-size:12px">00</div>
<div class="t" style="left:1206px;top:553px;font-size:12px">92</div>
<div class="t" style="left:1272px;top:553px;font-size:12px">92</div>
<div class="t" style="left:1338px;top:553px;font-size:12px">02</div>
<div class="t" style="left:637px;top:577px;font-size:12px;font-weight:bold;color:#222">8</div>
<div class="t" style="left:664px;top:577px;font-size:12px">12011000</div>
<div class="t" style="left:738px;top:577px;font-size:12px">2009-03-25</div>
<div class="t" style="left:824px;top:577px;font-size:12px">MJSA238-01001</div>
<div class="t" style="left:943px;top:577px;font-size:12px">2009</div>
<div class="t" style="left:1008px;top:577px;font-size:12px">160</div>
<div class="t" style="left:1074px;top:577px;font-size:12px">04</div>
<div class="t" style="left:1140px;top:577px;font-size:12px">00</div>
<div class="t" style="left:1206px;top:577px;font-size:12px">92</div>
<div class="t" style="left:1272px;top:577px;font-size:12px">92</div>
<div class="t" style="left:1338px;top:577px;font-size:12px">02</div>
<div class="t" style="left:637px;top:601px;font-size:12px;font-weight:bold;color:#222">9</div>
<div class="t" style="left:664px;top:601px;font-size:12px">12011000</div>
<div class="t" style="left:738px;top:601px;font-size:12px">2009-04-08</div>
<div class="t" style="left:824px;top:601px;font-size:12px">MJSA238-01001</div>
<div class="t" style="left:943px;top:601px;font-size:12px">2009</div>
<div class="t" style="left:1008px;top:601px;font-size:12px">161</div>
<div class="t" style="left:1074px;top:601px;font-size:12px">04</div>
<div class="t" style="left:1140px;top:601px;font-size:12px">00</div>
<div class="t" style="left:1206px;top:601px;font-size:12px">92</div>
<div class="t" style="left:1272px;top:601px;font-size:12px">92</div>
<div class="t" style="left:1338px;top:601px;font-size:12px">02</div>
<div class="t" style="left:634px;top:625px;font-size:12px;font-weight:bold;color:#222">10</div>
<div class="t" style="left:664px;top:625px;font-size:12px">12011000</div>
<div class="t" style="left:738px;top:625px;font-size:12px">2009-04-17</div>
<div class="t" style="left:824px;top:625px;font-size:12px">MJSA238-01001</div>
<div class="t" style="left:943px;top:625px;font-size:12px">2009</div>
<div class="t" style="left:1008px;top:625px;font-size:12px">151</div>
<div class="t" style="left:1074px;top:625px;font-size:12px">04</div>
<div class="t" style="left:1140px;top:625px;font-size:12px">00</div>
<div class="t" style="left:1206px;top:625px;font-size:12px">92</div>
<div class="t" style="left:1272px;top:625px;font-size:12px">92</div>
<div class="t" style="left:1338px;top:625px;font-size:12px">02</div>
<div class="t" style="left:634px;top:649px;font-size:12px;font-weight:bold;color:#222">11</div>
<div class="t" style="left:664px;top:649px;font-size:12px">12011000</div>
<div class="t" style="left:738px;top:649px;font-size:12px">2009-04-27</div>
<div class="t" style="left:824px;top:649px;font-size:12px">MJSA238-01001</div>
<div class="t" style="left:943px;top:649px;font-size:12px">2009</div>
<div class="t" style="left:1008px;top:649px;font-size:12px">161</div>
<div class="t" style="left:1074px;top:649px;font-size:12px">04</div>
<div class="t" style="left:1140px;top:649px;font-size:12px">00</div>
<div class="t" style="left:1206px;top:649px;font-size:12px">92</div>
<div class="t" style="left:1272px;top:649px;font-size:12px">92</div>
<div class="t" style="left:1338px;top:649px;font-size:12px">02</div>
<div class="t" style="left:634px;top:673px;font-size:12px;font-weight:bold;color:#222">12</div>
<div class="t" style="left:664px;top:673px;font-size:12px">12011000</div>
<div class="t" style="left:738px;top:673px;font-size:12px">2009-05-16</div>
<div class="t" style="left:824px;top:673px;font-size:12px">MJSA238-01001</div>
<div class="t" style="left:943px;top:673px;font-size:12px">2009</div>
<div class="t" style="left:1008px;top:673px;font-size:12px">M00</div>
<div class="t" style="left:1074px;top:673px;font-size:12px">00</div>
<div class="t" style="left:1140px;top:673px;font-size:12px">00</div>
<div class="t" style="left:1206px;top:673px;font-size:12px">A1</div>
<div class="t" style="left:1272px;top:673px;font-size:12px">A1</div>
<div class="t" style="left:1338px;top:673px;font-size:12px">02</div>
<div class="t" style="left:634px;top:697px;font-size:12px;font-weight:bold;color:#222">13</div>
<div class="t" style="left:664px;top:697px;font-size:12px">12011000</div>
<div class="t" style="left:738px;top:697px;font-size:12px">2009-06-12</div>
<div class="t" style="left:824px;top:697px;font-size:12px">MJSA238-01001</div>
<div class="t" style="left:943px;top:697px;font-size:12px">3016</div>
<div class="t" style="left:1008px;top:697px;font-size:12px">M00</div>
<div class="t" style="left:1074px;top:697px;font-size:12px">00</div>
<div class="t" style="left:1140px;top:697px;font-size:12px">00</div>
<div class="t" style="left:1206px;top:697px;font-size:12px">A1</div>
<div class="t" style="left:1272px;top:697px;font-size:12px">A1</div>
<div class="t" style="left:1338px;top:697px;font-size:12px">02</div>
<div class="t" style="left:636px;top:724px;font-size:12px;color:#2f7fd8">显示行数</div>
<div class="t" style="left:699px;top:724px;font-size:12px">每页</div>
<div class="t" style="left:729px;top:724px;font-size:12px;color:#2f7fd8">100</div>
<svg width="8" height="5" style="left:752px;top:729px" viewBox="0 0 8 5"><path d="M0 0 H8 L4 4.5 Z" fill="#2f7fd8"/></svg>
<div class="t" style="left:764px;top:724px;font-size:12px">条</div>
<div class="t" style="left:792px;top:724px;font-size:12px;color:#bbb">首页</div>
<div class="t" style="left:828px;top:724px;font-size:12px;color:#bbb">上一页</div>
<div class="t" style="left:876px;top:724px;font-size:12px">下一页</div>
<div class="t" style="left:924px;top:724px;font-size:12px">末页</div>
<div class="t" style="left:1118px;top:724px;font-size:12px">抽样数据，可在<span style="color:#2f7fd8">调试数据集</span>中修改。耗时: 8ms</div>
<div id="ov" class="a"></div>
<div id="modal" class="a"></div>
<div class="t" style="left:517px;top:177px;font-size:16px;color:#333">选择字段</div>
<div class="t" style="left:517px;top:215px;font-size:12px;color:#333">选择需要的字段，勾选未匹配的字段来加入新的字段。</div>
<div class="cbk" style="left:863px;top:216px;background:#3d9cf0"></div>
<svg width="12" height="12" style="left:863px;top:216px" viewBox="0 0 12 12"><path d="M2.5 6.2 L5 8.6 L9.6 3.6" fill="none" stroke="#fff" stroke-width="1.6"/></svg>
<div class="t" style="left:880px;top:215px;font-size:12px">全选</div>
<div class="cb" style="left:916px;top:216px"></div>
<div class="t" style="left:933px;top:215px;font-size:12px">反选</div>
<div class="a" style="left:517px;top:245px;width:440px;height:346px;border:1px solid #dcdcdc;background:#fff"></div>
<div class="a" style="left:518px;top:270px;width:438px;height:1px;background:#dcdcdc"></div>
<div class="a" style="left:518px;top:296px;width:438px;height:1px;background:#e8e8e8"></div>
<svg width="14" height="14" style="left:524px;top:251px" viewBox="0 0 14 14"><circle cx="6" cy="6" r="5.4" fill="none" stroke="#333" stroke-width="1.2"/><path d="M10 10 L13 13" fill="none" stroke="#333" stroke-width="1.2"/></svg>
<div class="t" style="left:528px;top:277px;font-size:12px;font-weight:bold">字段名</div>
<div class="t" style="left:695px;top:277px;font-size:12px;font-weight:bold">物理字段</div>
<div class="t" style="left:823px;top:277px;font-size:12px;font-weight:bold">来源字段</div>
<div class="cbk" style="left:535px;top:304px;background:#3d9cf0"></div>
<svg width="12" height="12" style="left:535px;top:304px" viewBox="0 0 12 12"><path d="M2.5 6.2 L5 8.6 L9.6 3.6" fill="none" stroke="#fff" stroke-width="1.6"/></svg>
<div class="t" style="left:553.5px;top:304.5px;font-size:9.5px;letter-spacing:-0.2px;color:#3d9cf0">abc</div>
<div class="t" style="left:573px;top:303.5px;font-size:12px">销售单位</div>
<div class="t" style="left:695px;top:304px;font-size:12px">XSDW</div>
<div class="t" style="left:823px;top:304px;font-size:12px">XSDW</div>
<div class="cbk" style="left:535px;top:330px;background:#3d9cf0"></div>
<svg width="12" height="12" style="left:535px;top:330px" viewBox="0 0 12 12"><path d="M2.5 6.2 L5 8.6 L9.6 3.6" fill="none" stroke="#fff" stroke-width="1.6"/></svg>
<div class="t" style="left:553.5px;top:330.5px;font-size:9.5px;letter-spacing:-0.2px;color:#3d9cf0">abc</div>
<div class="t" style="left:573px;top:329.5px;font-size:12px">行政区划（数据级...</div>
<div class="t" style="left:695px;top:330px;font-size:12px">HZQHSJJC</div>
<div class="t" style="left:823px;top:330px;font-size:12px">HZQHSJJC</div>
<div class="cbk" style="left:535px;top:356px;background:#3d9cf0"></div>
<svg width="12" height="12" style="left:535px;top:356px" viewBox="0 0 12 12"><path d="M2.5 6.2 L5 8.6 L9.6 3.6" fill="none" stroke="#fff" stroke-width="1.6"/></svg>
<div class="t" style="left:553.5px;top:356.5px;font-size:9.5px;letter-spacing:-0.2px;color:#3d9cf0">abc</div>
<div class="t" style="left:573px;top:355.5px;font-size:12px">省份</div>
<div class="t" style="left:695px;top:356px;font-size:12px">SF</div>
<div class="t" style="left:823px;top:356px;font-size:12px">SF</div>
<div class="cbk" style="left:535px;top:382px;background:#3d9cf0"></div>
<svg width="12" height="12" style="left:535px;top:382px" viewBox="0 0 12 12"><path d="M2.5 6.2 L5 8.6 L9.6 3.6" fill="none" stroke="#fff" stroke-width="1.6"/></svg>
<svg width="11" height="11" style="left:556px;top:382px" viewBox="0 0 11 11"><path d="M0.5 2 H10.5 V10.5 H0.5 Z M3 0 V3 M8 0 V3" fill="none" stroke="#3d9cf0" stroke-width="1"/></svg>
<div class="t" style="left:573px;top:381.5px;font-size:12px">销售日期</div>
<div class="t" style="left:695px;top:382px;font-size:12px">XSRQ</div>
<div class="t" style="left:823px;top:382px;font-size:12px">XSRQ</div>
<div class="cbk" style="left:535px;top:408px;background:#3d9cf0"></div>
<svg width="12" height="12" style="left:535px;top:408px" viewBox="0 0 12 12"><path d="M2.5 6.2 L5 8.6 L9.6 3.6" fill="none" stroke="#fff" stroke-width="1.6"/></svg>
<div class="t" style="left:553.5px;top:408.5px;font-size:9.5px;letter-spacing:-0.2px;color:#3d9cf0">abc</div>
<div class="t" style="left:573px;top:407.5px;font-size:12px">产品编码</div>
<div class="t" style="left:695px;top:408px;font-size:12px">CPBM</div>
<div class="t" style="left:823px;top:408px;font-size:12px">CPBM</div>
<div class="cbk" style="left:535px;top:434px;background:#3d9cf0"></div>
<svg width="12" height="12" style="left:535px;top:434px" viewBox="0 0 12 12"><path d="M2.5 6.2 L5 8.6 L9.6 3.6" fill="none" stroke="#fff" stroke-width="1.6"/></svg>
<div class="t" style="left:553.5px;top:434.5px;font-size:9.5px;letter-spacing:-0.2px;color:#3d9cf0">abc</div>
<div class="t" style="left:573px;top:433.5px;font-size:12px">颜色</div>
<div class="t" style="left:695px;top:434px;font-size:12px">YS</div>
<div class="t" style="left:823px;top:434px;font-size:12px">YS</div>
<div class="cbk" style="left:535px;top:460px;background:#3d9cf0"></div>
<svg width="12" height="12" style="left:535px;top:460px" viewBox="0 0 12 12"><path d="M2.5 6.2 L5 8.6 L9.6 3.6" fill="none" stroke="#fff" stroke-width="1.6"/></svg>
<div class="t" style="left:553.5px;top:460.5px;font-size:9.5px;letter-spacing:-0.2px;color:#3d9cf0">abc</div>
<div class="t" style="left:573px;top:459.5px;font-size:12px">尺码</div>
<div class="t" style="left:695px;top:460px;font-size:12px">CM</div>
<div class="t" style="left:823px;top:460px;font-size:12px">CM</div>
<div class="cbk" style="left:535px;top:486px;background:#3d9cf0"></div>
<svg width="12" height="12" style="left:535px;top:486px" viewBox="0 0 12 12"><path d="M2.5 6.2 L5 8.6 L9.6 3.6" fill="none" stroke="#fff" stroke-width="1.6"/></svg>
<div class="t" style="left:553.5px;top:486.5px;font-size:9.5px;letter-spacing:-0.2px;color:#3d9cf0">abc</div>
<div class="t" style="left:573px;top:485.5px;font-size:12px">产品季节</div>
<div class="t" style="left:695px;top:486px;font-size:12px">CPJJ</div>
<div class="t" style="left:823px;top:486px;font-size:12px">CPJJ</div>
<div class="cbk" style="left:535px;top:512px;background:#3d9cf0"></div>
<svg width="12" height="12" style="left:535px;top:512px" viewBox="0 0 12 12"><path d="M2.5 6.2 L5 8.6 L9.6 3.6" fill="none" stroke="#fff" stroke-width="1.6"/></svg>
<div class="t" style="left:553.5px;top:512.5px;font-size:9.5px;letter-spacing:-0.2px;color:#3d9cf0">abc</div>
<div class="t" style="left:573px;top:511.5px;font-size:12px">系列</div>
<div class="t" style="left:695px;top:512px;font-size:12px">CPXL</div>
<div class="t" style="left:823px;top:512px;font-size:12px">CPXL</div>
<div class="cbk" style="left:535px;top:538px;background:#3d9cf0"></div>
<svg width="12" height="12" style="left:535px;top:538px" viewBox="0 0 12 12"><path d="M2.5 6.2 L5 8.6 L9.6 3.6" fill="none" stroke="#fff" stroke-width="1.6"/></svg>
<div class="t" style="left:553.5px;top:538.5px;font-size:9.5px;letter-spacing:-0.2px;color:#3d9cf0">abc</div>
<div class="t" style="left:573px;top:537.5px;font-size:12px">生产季节</div>
<div class="t" style="left:695px;top:538px;font-size:12px">SCJJ</div>
<div class="t" style="left:823px;top:538px;font-size:12px">SCJJ</div>
<div class="cbk" style="left:535px;top:564px;background:#3d9cf0"></div>
<svg width="12" height="12" style="left:535px;top:564px" viewBox="0 0 12 12"><path d="M2.5 6.2 L5 8.6 L9.6 3.6" fill="none" stroke="#fff" stroke-width="1.6"/></svg>
<div class="t" style="left:553.5px;top:564.5px;font-size:9.5px;letter-spacing:-0.2px;color:#3d9cf0">abc</div>
<div class="t" style="left:573px;top:563.5px;font-size:12px">销售季节</div>
<div class="t" style="left:695px;top:564px;font-size:12px">XSJJ</div>
<div class="t" style="left:823px;top:564px;font-size:12px">XSJJ</div>
<div class="a" style="left:805px;top:611px;width:70px;height:26px;background:#1a9be6;border-radius:3px"></div>
<div class="t" style="left:828px;top:618.5px;font-size:12px;font-weight:bold;color:#fff">确定</div>
<div class="a" style="left:887px;top:611px;width:70px;height:26px;border:1px solid #d0d0d0;border-radius:3px;background:#fff"></div>
<div class="t" style="left:910px;top:618.5px;font-size:12px">取消</div>
</body></html>
